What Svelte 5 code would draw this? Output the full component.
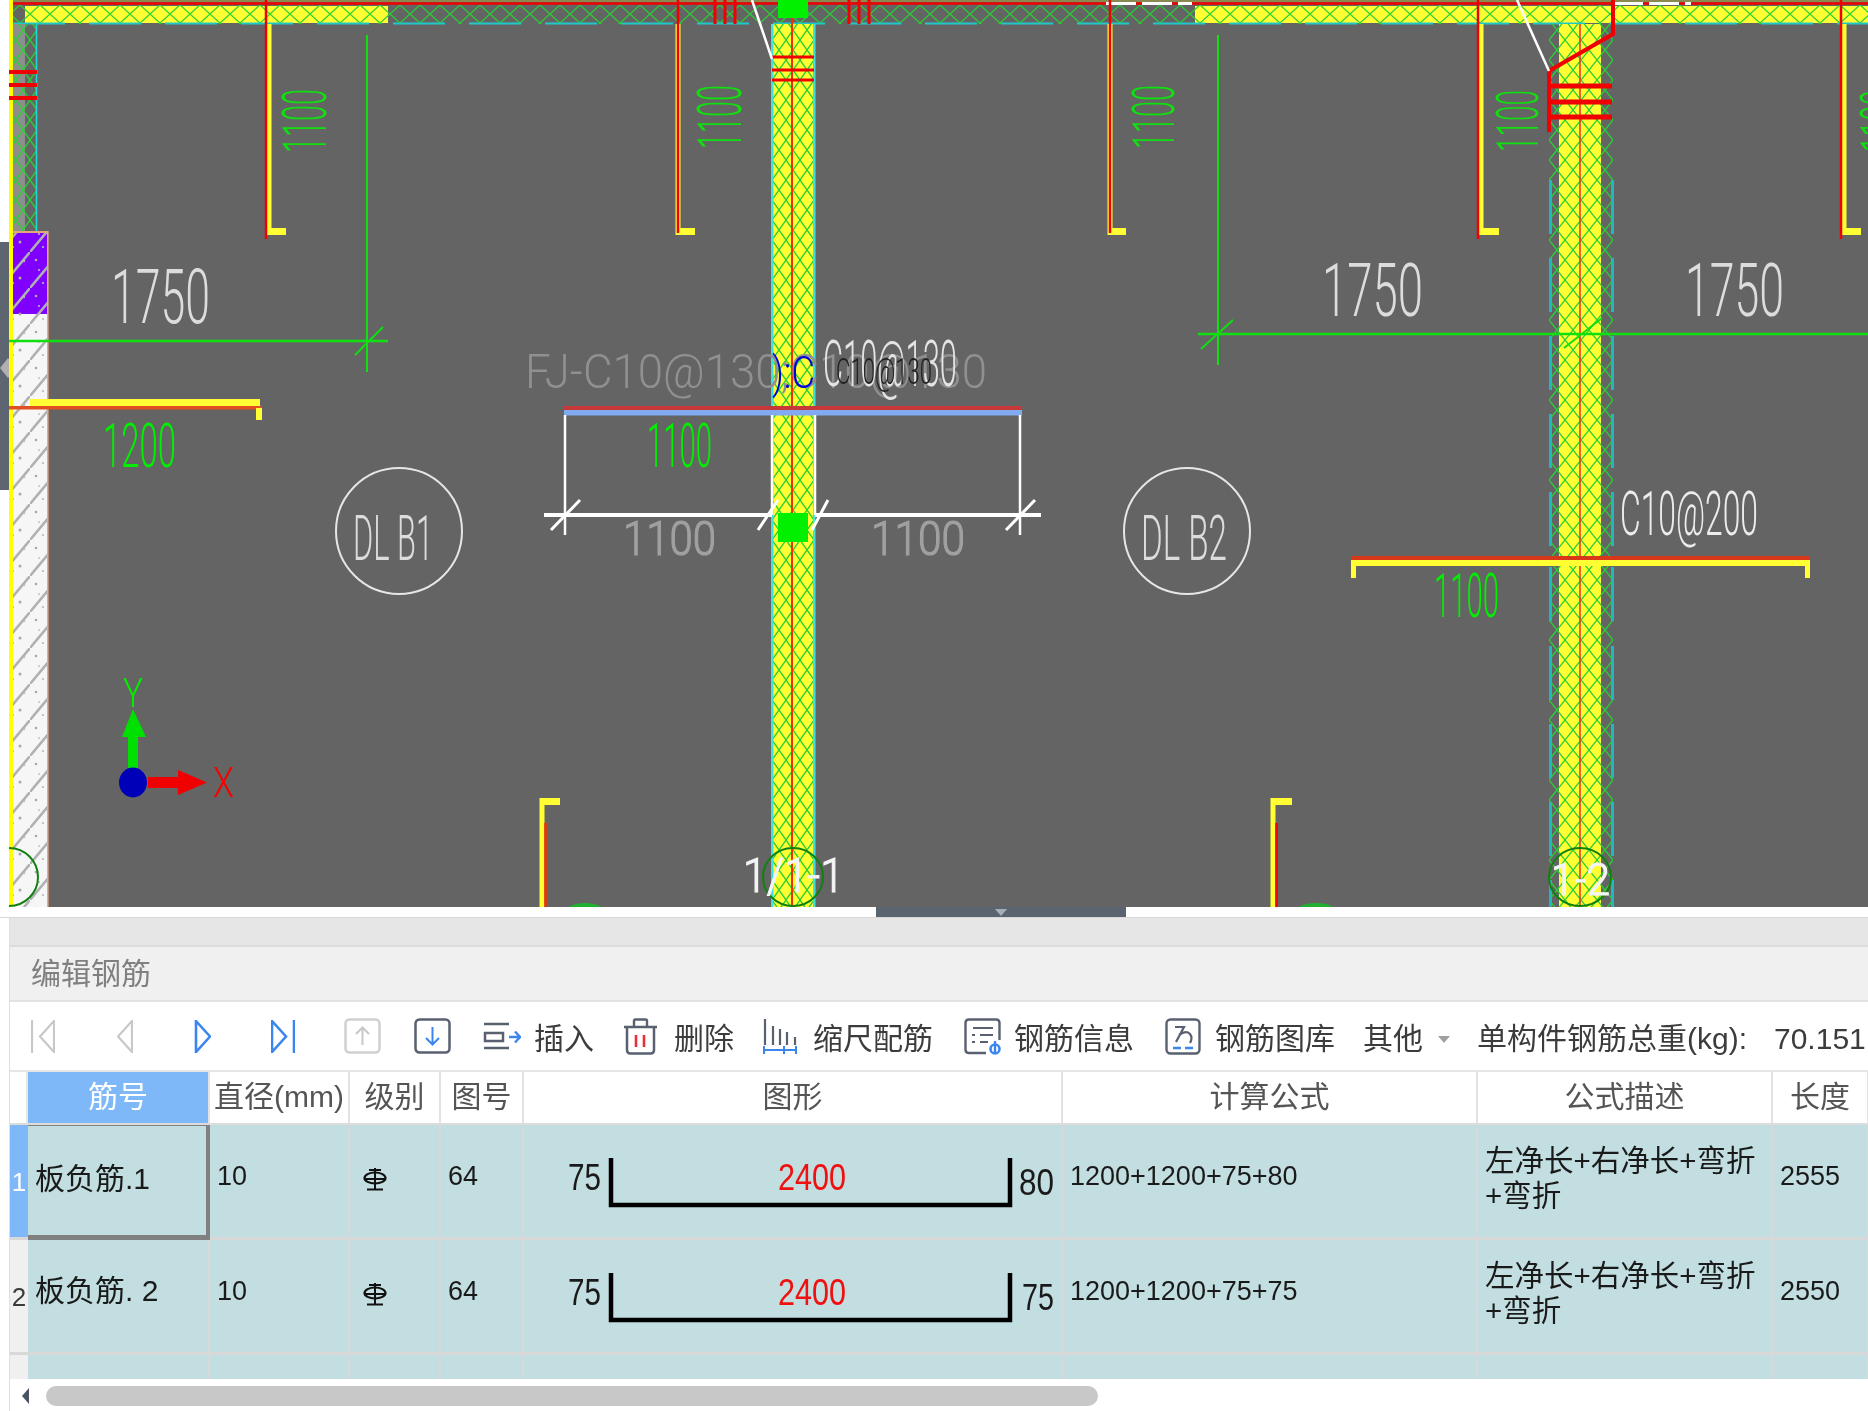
<script>
  // CAD labels: x, baseline y, text width, glyph height, colour, extra outline for the heavier ones
  const labels = [
    { t: '1750', x: 111, y: 323, w: 99, h: 54, c: '#dcdcdc' },
    { t: '1750', x: 1322, y: 316, w: 101, h: 53, c: '#dcdcdc' },
    { t: '1750', x: 1685, y: 316, w: 99, h: 53, c: '#dcdcdc' },
    { t: '1200', x: 103, y: 467, w: 73, h: 44, c: '#00f000' },
    { t: '1100', x: 647, y: 467, w: 65, h: 44, c: '#00f000' },
    { t: '1100', x: 1434, y: 617, w: 65, h: 44, c: '#00f000' },
    { t: '1100', x: 623, y: 555, w: 93, h: 34, c: '#a0a0a0', sw: 1.2 },
    { t: '1100', x: 871, y: 555, w: 94, h: 34, c: '#a0a0a0', sw: 1.2 },
    { t: 'FJ-C10@130;C10@130', x: 525, y: 388, w: 462, h: 34, c: '#909090' },
    { t: '):C', x: 772, y: 388, w: 43, h: 32, c: '#0000e0' },
    { t: 'C10@130', x: 823, y: 386, w: 134, h: 46, c: '#e4e4e4' },
    { t: 'C10@130', x: 836, y: 384, w: 96, h: 26, c: '#222222' },
    { t: 'C10@200', x: 1620, y: 535, w: 138, h: 43, c: '#ececec' },
    { t: 'DL B1', x: 353, y: 560, w: 80, h: 45, c: '#dcdcdc' },
    { t: 'DL B2', x: 1141, y: 560, w: 86, h: 45, c: '#dcdcdc' },
    { t: '1/1-1', x: 743, y: 892, w: 101, h: 34, c: '#f4f4f4', sw: 1.2 },
    { t: '1-2', x: 1551, y: 895, w: 59, h: 32, c: '#f4f4f4', sw: 1.2 },
    { t: 'Y', x: 123, y: 707, w: 20, h: 29, c: '#00f000' },
    { t: 'X', x: 213, y: 797, w: 21, h: 30, c: '#f80000' }
  ]

  // "1100" written up the sheet next to each top rebar
  const upright = [
    { x: 326, y: 153, w: 64, h: 43 },
    { x: 741, y: 149, w: 64, h: 43 },
    { x: 1174, y: 149, w: 64, h: 42 },
    { x: 1538, y: 152, w: 62, h: 42 },
    { x: 1902, y: 152, w: 62, h: 42 }
  ]

  // x of yellow leg, hook end, x and bottom of the red leg
  const topBars = [
    { x: 269, hook: 286, red: 266, end: 239 },
    { x: 678, hook: 695, red: 678, end: 233 },
    { x: 1110, hook: 1126, red: 1110, end: 233 },
    { x: 1481, hook: 1499, red: 1478, end: 239 },
    { x: 1844, hook: 1861, red: 1841, end: 239 }
  ]

  const columns = [
    { name: '筋号', head: 'active' },
    { name: '直径(mm)' },
    { name: '级别' },
    { name: '图号' },
    { name: '图形' },
    { name: '计算公式' },
    { name: '公式描述' },
    { name: '长度' }
  ]

  const rows = [
    { no: '1', name: '板负筋.1', end: '80', endX: 495, endW: 35, formula: '1200+1200+75+80', len: '2555', selected: true },
    { no: '2', name: '板负筋. 2', end: '75', endX: 498, endW: 32, formula: '1200+1200+75+75', len: '2550' }
  ]

  const dashStarts = [180, 258, 336, 414, 492, 567, 646, 724, 802]
</script>

<div class="page">
  <svg class="sheet" width="1868" height="907" viewBox="0 0 1868 907">
    <defs>
      <pattern id="hatch-h" width="20" height="18" patternUnits="userSpaceOnUse" y="5">
        <path d="M0 0 L20 18 M20 0 L0 18" stroke="#28d032" stroke-width="1.300" fill="none" />
      </pattern>
      <pattern id="hatch-v" width="14" height="20" patternUnits="userSpaceOnUse" x="772">
        <path d="M0 0 L14 20 M14 0 L0 20" stroke="#28d032" stroke-width="1.300" fill="none" />
      </pattern>
      <pattern id="hatch-r" width="16" height="20" patternUnits="userSpaceOnUse" x="1549">
        <path d="M0 0 L16 20 M16 0 L0 20" stroke="#28d032" stroke-width="1.300" fill="none" />
      </pattern>
      <pattern id="concrete" width="30" height="36" patternUnits="userSpaceOnUse">
        <path d="M0 36 L30 0" stroke="#b0b0b0" stroke-width="2.500" />
        <circle cx="6" cy="8" r="1.300" fill="#a8a8a8" />
        <circle cx="20" cy="26" r="1.500" fill="#a8a8a8" />
        <circle cx="13" cy="31" r="1.100" fill="#b8b8b8" />
        <circle cx="24" cy="9" r="1.200" fill="#b8b8b8" />
        <circle cx="9" cy="18" r="1" fill="#c0c0c0" />
      </pattern>
    </defs>

    <rect width="1868" height="907" fill="#646464" />
    <rect width="9" height="907" fill="#ffffff" />
    <rect y="242" width="9" height="248" fill="#5c6570" />
    <polygon points="0,368 8,358 16,368 8,378" fill="#b0b0b0" />

    <!-- top wall -->
    <rect x="25" y="6" width="363" height="17" fill="#ffff33" />
    <rect x="1195" y="6" width="673" height="17" fill="#ffff33" />
    <rect x="13" y="5" width="1855" height="19" fill="url(#hatch-h)" />
    <line x1="13" y1="23.500" x2="1868" y2="23.500" stroke="#20c8c8" stroke-width="2" stroke-dasharray="52 24" />
    <rect x="9" y="0" width="1859" height="2" fill="#8a8a50" />
    <line x1="9" y1="3.500" x2="1868" y2="3.500" stroke="#f00000" stroke-width="2.500" />
    <line x1="1106" y1="3.500" x2="1192" y2="3.500" stroke="#ffffff" stroke-width="3" stroke-dasharray="30 6" />
    <line x1="1613" y1="3.500" x2="1691" y2="3.500" stroke="#ffffff" stroke-width="3" stroke-dasharray="30 6" />

    <!-- left wall -->
    <rect x="13" y="24" width="12" height="210" fill="#8e8e8e" />
    <rect x="13" y="24" width="24" height="210" fill="url(#hatch-v)" />
    <line x1="36.500" y1="24" x2="36.500" y2="232" stroke="#20d8d8" stroke-width="1.600" />
    <rect x="13" y="233" width="34" height="81" fill="#8000ff" />
    <rect x="13" y="314" width="34" height="593" fill="#f6f6f6" />
    <rect x="13" y="233" width="34" height="674" fill="url(#concrete)" />
    <rect x="13" y="231" width="34" height="2" fill="#e0a878" />
    <rect x="47" y="231" width="1.600" height="676" fill="#f0a878" />
    <rect x="9" y="0" width="4" height="907" fill="#ffff00" />
    <g stroke="#f00000" stroke-width="4">
      <line x1="9" y1="72" x2="37" y2="72" />
      <line x1="9" y1="85" x2="37" y2="85" />
      <line x1="9" y1="98" x2="37" y2="98" />
    </g>
    <path d="M9 848A29 29 0 0 1 9 906" fill="none" stroke="#108010" stroke-width="2" />

    <!-- middle wall -->
    <rect x="772" y="24" width="42" height="883" fill="#ffff33" />
    <rect x="772" y="24" width="42" height="883" fill="url(#hatch-v)" />
    <rect x="771" y="24" width="2.500" height="883" fill="#40e0e0" />
    <rect x="813" y="24" width="2.500" height="883" fill="#40e0e0" />
    <line x1="792" y1="0" x2="792" y2="907" stroke="#f03000" stroke-width="2" />
    <g stroke="#f00000" stroke-width="3">
      <line x1="772" y1="57" x2="814" y2="57" />
      <line x1="772" y1="70" x2="814" y2="70" />
      <line x1="772" y1="80" x2="814" y2="80" />
      <line x1="715" y1="0" x2="715" y2="24" />
      <line x1="725" y1="0" x2="725" y2="24" />
      <line x1="735" y1="0" x2="735" y2="24" />
      <line x1="849" y1="0" x2="849" y2="24" />
      <line x1="859" y1="0" x2="859" y2="24" />
      <line x1="869" y1="0" x2="869" y2="24" />
    </g>
    <line x1="752" y1="0" x2="772" y2="59" stroke="#ffffff" stroke-width="2.500" />
    <rect x="778" y="0" width="30" height="18" fill="#00f000" />

    <!-- right wall -->
    <rect x="1559" y="24" width="42" height="883" fill="#ffff33" />
    <rect x="1549" y="24" width="64" height="883" fill="url(#hatch-r)" />
    {#each dashStarts as y}
      <rect x="1549" {y} width="3" height="54" fill="#20b8c0" />
      <rect x="1611" {y} width="3" height="54" fill="#20b8c0" />
    {/each}
    <rect x="1549" y="880" width="3" height="27" fill="#20b8c0" />
    <rect x="1611" y="880" width="3" height="27" fill="#20b8c0" />
    <line x1="1580" y1="24" x2="1580" y2="907" stroke="#f03828" stroke-width="1.600" />
    <polyline points="1613,0 1613,34 1549,71 1549,132" fill="none" stroke="#f00000" stroke-width="4" />
    <g stroke="#f00000" stroke-width="5">
      <line x1="1549" y1="86" x2="1612" y2="86" />
      <line x1="1549" y1="102" x2="1612" y2="102" />
      <line x1="1549" y1="117" x2="1612" y2="117" />
    </g>
    <line x1="1517" y1="0" x2="1549" y2="71" stroke="#ffffff" stroke-width="2.500" />

    <!-- top rebars -->
    {#each topBars as bar}
      <line x1={bar.x} y1="24" x2={bar.x} y2="235" stroke="#ffff33" stroke-width="5" />
      <line x1={bar.x - 2} y1="231.500" x2={bar.hook} y2="231.500" stroke="#ffff33" stroke-width="7" />
      <line x1={bar.red} y1="0" x2={bar.red} y2={bar.end} stroke="#f00000" stroke-width="2.500" />
    {/each}

    <!-- dimension lines -->
    <g stroke="#10e010" stroke-width="2">
      <line x1="367" y1="35" x2="367" y2="372" />
      <line x1="9" y1="341" x2="388" y2="341" stroke-width="2.500" />
      <line x1="355" y1="355" x2="383" y2="327" />
      <line x1="1218" y1="35" x2="1218" y2="365" />
      <line x1="1198" y1="334" x2="1868" y2="334" stroke-width="2.500" />
      <line x1="1201" y1="349" x2="1233" y2="320" />
      <line x1="1564" y1="348" x2="1602" y2="318" />
    </g>

    <!-- left bracket bar -->
    <rect x="30" y="399" width="230" height="8" fill="#ffff33" />
    <rect x="9" y="406" width="253" height="3.500" fill="#e05020" />
    <rect x="256" y="408" width="6" height="12" fill="#ffff33" />

    <!-- middle bracket bar -->
    <rect x="564" y="406" width="458" height="4" fill="#c83838" />
    <rect x="564" y="410" width="458" height="5.500" fill="#82aaf0" />
    <g stroke="#ffffff">
      <line x1="565" y1="415" x2="565" y2="535" stroke-width="2.500" />
      <line x1="1020" y1="415" x2="1020" y2="535" stroke-width="2.500" />
      <line x1="772" y1="415" x2="772" y2="515" stroke-width="2.500" />
      <line x1="815" y1="415" x2="815" y2="515" stroke-width="2.500" />
      <line x1="544" y1="515" x2="772" y2="515" stroke-width="4" />
      <line x1="815" y1="515" x2="1041" y2="515" stroke-width="4" />
      <line x1="551" y1="530" x2="580" y2="500" stroke-width="3" />
      <line x1="758" y1="530" x2="778" y2="500" stroke-width="3" />
      <line x1="812" y1="530" x2="828" y2="500" stroke-width="3" />
      <line x1="1006" y1="530" x2="1035" y2="500" stroke-width="3" />
    </g>
    <rect x="778" y="513" width="30" height="29" fill="#00f000" />

    <!-- right bracket bar -->
    <rect x="1351" y="556" width="459" height="4" fill="#d83818" />
    <rect x="1351" y="560" width="459" height="6" fill="#ffff33" />
    <rect x="1351" y="565" width="5" height="13" fill="#ffff33" />
    <rect x="1805" y="565" width="5" height="13" fill="#ffff33" />

    <!-- slab marks -->
    <g fill="none" stroke="#e6e6e6" stroke-width="2">
      <circle cx="399" cy="531" r="63" />
      <circle cx="1187" cy="531" r="63" />
    </g>

    <!-- bottom rebars -->
    <line x1="542" y1="798" x2="542" y2="907" stroke="#ffff33" stroke-width="5" />
    <line x1="540" y1="801.500" x2="560" y2="801.500" stroke="#ffff33" stroke-width="7" />
    <line x1="545.500" y1="823" x2="545.500" y2="907" stroke="#f03000" stroke-width="2.500" />
    <line x1="1273" y1="798" x2="1273" y2="907" stroke="#ffff33" stroke-width="5" />
    <line x1="1271" y1="801.500" x2="1292" y2="801.500" stroke="#ffff33" stroke-width="7" />
    <line x1="1276.500" y1="823" x2="1276.500" y2="907" stroke="#f00000" stroke-width="2.500" />
    <ellipse cx="585" cy="912" rx="20" ry="9" fill="#20b030" />
    <ellipse cx="1316" cy="912" rx="21" ry="9" fill="#20b030" />

    <!-- axis marker -->
    <rect x="128" y="735" width="10" height="35" fill="#00e000" />
    <polygon points="133,709 146,737 122,737" fill="#00e000" />
    <rect x="148" y="777" width="32" height="11" fill="#f00000" />
    <polygon points="178,770 207,782.500 178,795" fill="#f00000" />
    <ellipse cx="133" cy="782.500" rx="14" ry="15" fill="#0000b8" />

    <!-- grid bubbles -->
    <ellipse cx="793" cy="877" rx="30" ry="29" fill="none" stroke="#108010" stroke-width="2" />
    <ellipse cx="1580" cy="877" rx="31" ry="29" fill="none" stroke="#108010" stroke-width="2" />

    {#each labels as l}
      <text class="cad" x={l.x} y={l.y} font-size={l.h / 0.711} textLength={l.w} lengthAdjust="spacingAndGlyphs" fill={l.c} stroke={l.sw ? l.c : 'none'} stroke-width={l.sw ?? 0}>{l.t}</text>
    {/each}
    {#each upright as l}
      <text class="cad" transform="translate({l.x} {l.y}) rotate(-90)" font-size={l.h / 0.711} textLength={l.w} lengthAdjust="spacingAndGlyphs" fill="#10e010">1100</text>
    {/each}
  </svg>

  <div class="splitter">
    <div class="handle"><span class="handle-arrow"></span></div>
  </div>

  <div class="panel">
    <div class="gray-bar"></div>
    <div class="title">编辑钢筋</div>

    <div class="toolbar">
      <svg class="nav first" width="24" height="33" viewBox="0 0 24 33"><path d="M1 0V33" /><path d="M23 1L9 16.500 23 32Z" /></svg>
      <svg class="nav prev" width="16" height="33" viewBox="0 0 16 33"><path d="M15 1L1 16.500 15 32Z" /></svg>
      <svg class="nav on next" width="17" height="33" viewBox="0 0 17 33"><path d="M2 1L16 16.500 2 32Z" /></svg>
      <svg class="nav on last" width="24" height="33" viewBox="0 0 24 33"><path d="M1 1L15 16.500 1 32Z" /><path d="M23 0V33" /></svg>

      <svg class="move up" width="37" height="36" viewBox="0 0 37 36">
        <rect x="1.500" y="1.500" width="34" height="33" rx="4" fill="none" stroke="#d0d0d0" stroke-width="2.500" />
        <path d="M18.500 27V10M12 16l6.500-6.500L25 16" fill="none" stroke="#c8c8c8" stroke-width="2" />
      </svg>
      <svg class="move down" width="37" height="36" viewBox="0 0 37 36">
        <rect x="1.500" y="1.500" width="34" height="33" rx="4" fill="none" stroke="#596170" stroke-width="2.500" />
        <path d="M18.500 9V26M12 20l6.500 6.500L25 20" fill="none" stroke="#3b86ee" stroke-width="2" />
      </svg>

      <svg class="tool t-insert" width="38" height="28" viewBox="0 0 38 28">
        <path d="M26 2H1M1 26H26" fill="none" stroke="#596170" stroke-width="2.500" />
        <rect x="2" y="11" width="18" height="8" fill="none" stroke="#596170" stroke-width="2.500" />
        <path d="M26 15H37M32 9.500l5 5.500-5 5.500" fill="none" stroke="#3b86ee" stroke-width="2.400" />
      </svg>
      <span class="label l-insert">插入</span>

      <svg class="tool t-delete" width="35" height="37" viewBox="0 0 35 37">
        <path d="M1 9H34M11 8V3q0-1.500 1.500-1.500h10q1.500 0 1.500 1.500V8" fill="none" stroke="#596170" stroke-width="2.400" />
        <path d="M4 9V32q0 3.500 3.500 3.500h20q3.500 0 3.500-3.500V9" fill="none" stroke="#596170" stroke-width="2.500" />
        <path d="M13 17V29M21 17V29" stroke="#e83038" stroke-width="2.600" />
      </svg>
      <span class="label l-delete">删除</span>

      <svg class="tool t-scale" width="34" height="37" viewBox="0 0 34 37">
        <path d="M2 1V27M10 8V27M17 11V27M24 14V27M32 19V27" stroke="#596170" stroke-width="2.200" />
        <path d="M1 32H33M1 28V36M21 28V36M33 28V36" fill="none" stroke="#3b86ee" stroke-width="2" />
      </svg>
      <span class="label l-scale">缩尺配筋</span>

      <svg class="tool t-info" width="38" height="37" viewBox="0 0 38 37">
        <path d="M22 35H5q-3.500 0-3.500-3.500V5Q1.500 1.500 5 1.500H32q3.500 0 3.500 3.500V22" fill="none" stroke="#596170" stroke-width="2.400" />
        <path d="M9 10H29M16 17H29M16 24H24M8 17h3M8 24h3" fill="none" stroke="#596170" stroke-width="2.200" />
        <circle cx="31" cy="31" r="4.500" fill="none" stroke="#3b86ee" stroke-width="2.600" />
        <path d="M31 23V36" stroke="#3b86ee" stroke-width="2.400" />
      </svg>
      <span class="label l-info">钢筋信息</span>

      <svg class="tool t-lib" width="36" height="37" viewBox="0 0 36 37">
        <rect x="1.500" y="1.500" width="33" height="34" rx="4" fill="none" stroke="#596170" stroke-width="2.400" />
        <path d="M10 9H19L11 24M14 17Q21 12 25 16Q28 20 25 25" fill="none" stroke="#596170" stroke-width="2.200" />
        <path d="M8 30H16M20 30H28" stroke="#3b86ee" stroke-width="2.400" />
      </svg>
      <span class="label l-lib">钢筋图库</span>

      <span class="label l-more">其他</span>
      <span class="caret"></span>
      <span class="label l-total">单构件钢筋总重(kg):</span>
      <span class="label l-value">70.151</span>
    </div>

    <div class="grid-head">
      <div class="corner"></div>
      {#each columns as col}
        <div class="hcell" class:active={col.head === 'active'}>{col.name}</div>
      {/each}
    </div>

    {#each rows as row}
      <div class="grid-row">
        <div class="row-no" class:active={row.selected}>{row.no}</div>
        <div class="cell name" class:selected={row.selected}>{row.name}</div>
        <div class="cell num">10</div>
        <div class="cell grade">
          <svg width="24" height="23" viewBox="0 0 24 23">
            <ellipse cx="12" cy="10" rx="10.500" ry="5.500" fill="none" stroke="#111" stroke-width="2.200" />
            <path d="M12 0V22M6 2H18M2 11H22M4 21.500H20" stroke="#111" stroke-width="2" fill="none" />
          </svg>
        </div>
        <div class="cell num">64</div>
        <div class="cell shape">
          <svg width="539" height="112" viewBox="0 0 539 112">
            <polyline points="87,33 87,80 486,80 486,33" fill="none" stroke="#000" stroke-width="4.500" />
            <text class="dim" x="44" y="65" textLength="33" lengthAdjust="spacingAndGlyphs">75</text>
            <text class="dim red" x="254" y="65" textLength="68" lengthAdjust="spacingAndGlyphs">2400</text>
            <text class="dim" x={row.endX} y="70" textLength={row.endW} lengthAdjust="spacingAndGlyphs">{row.end}</text>
          </svg>
        </div>
        <div class="cell num">{row.formula}</div>
        <div class="cell desc">左净长+右净长+弯折<br />+弯折</div>
        <div class="cell num">{row.len}</div>
      </div>
    {/each}

    <div class="grid-row tail">
      <div class="row-no"></div>
      <div class="cell"></div>
      <div class="cell"></div>
      <div class="cell"></div>
      <div class="cell"></div>
      <div class="cell"></div>
      <div class="cell"></div>
      <div class="cell"></div>
      <div class="cell"></div>
    </div>

    <div class="scrollbar">
      <span class="scroll-left"></span>
      <div class="thumb"></div>
    </div>
  </div>
</div>

<style>
  :global(body) { margin: 0; background: #fff; }
  .page {
    width: 1868px; height: 1411px; overflow: hidden; background: #fff;
    font-family: "Liberation Sans", "Noto Sans CJK SC", sans-serif; color: #3c3c3c;
    filter: blur(0.7px);
  }
  .sheet { display: block; }
  .cad { font-family: Roboto, "Liberation Sans", sans-serif; font-weight: 300; }
  .splitter { height: 10px; padding-left: 876px; border-bottom: 1px solid #d8d8d8; }
  .handle { width: 250px; height: 10px; background: #5b6572; display: flex; justify-content: center; }
  .handle-arrow {
    width: 0; height: 0; margin-top: 2px;
    border: 6px solid transparent; border-top: 7px solid #a8aeb5; border-bottom: 0;
  }
  .panel { margin-left: 9px; border-left: 1px solid #e0e0e0; }
  .gray-bar { height: 27px; background: #e6e6e6; border-bottom: 2px solid #dcdcdc; }
  .title {
    height: 53px; padding-left: 21px; background: #f0f0f0; border-bottom: 2px solid #e2e2e2;
    font-size: 30px; line-height: 53px; color: #808080;
  }

  .toolbar {
    height: 68px; display: flex; align-items: center; padding-left: 21px;
    border-bottom: 2px solid #e6e6e6; white-space: nowrap; overflow: hidden;
  }
  .toolbar svg { flex-shrink: 0; }
  .nav path { fill: none; stroke: #c8c8c8; stroke-width: 2.2; }
  .nav.on path { stroke: #3b86ee; stroke-width: 2.6; }
  .prev { margin-left: 62px; }
  .next { margin-left: 61px; }
  .last { margin-left: 60px; }
  .up { margin-left: 49px; }
  .down { margin-left: 33px; }
  .t-insert { margin-left: 32px; }
  .t-delete { margin-left: 29px; }
  .t-scale { margin-left: 29px; }
  .t-info { margin-left: 31px; }
  .t-lib { margin-left: 31px; }
  .label { font-size: 30px; line-height: 40px; margin-top: 6px; color: #3c3c3c; flex-shrink: 0; }
  .l-insert { margin-left: 13px; }
  .l-delete { margin-left: 16px; }
  .l-scale { margin-left: 16px; }
  .l-info { margin-left: 12px; }
  .l-lib { margin-left: 14px; }
  .l-more { margin-left: 28px; }
  .caret {
    width: 0; height: 0; margin: 6px 0 0 15px; flex-shrink: 0;
    border: 6px solid transparent; border-top: 7px solid #a0a0a0; border-bottom: 0;
  }
  .l-total { margin-left: 27px; }
  .l-value { margin-left: 27px; }

  .grid-head, .grid-row {
    display: grid;
    grid-template-columns: 18px 182px 140px 91px 83px 539px 415px 295px 96px;
  }
  .grid-head { height: 51px; border-bottom: 2px solid #dcdcdc; }
  .corner { border-right: 2px solid #e6e6e6; }
  .hcell {
    border-right: 2px solid #e2e2e2; text-align: center;
    font-size: 30px; line-height: 50px; color: #555; white-space: nowrap;
  }
  .hcell.active { background: #7fb8f8; color: #fff; }

  .grid-row { height: 115px; background: #c2dee0; }
  .grid-row.tail { height: 24px; }
  .row-no {
    box-sizing: border-box; background: #f0f0f0; border-bottom: 3px solid #d8d8d8;
    font-size: 26px; line-height: 114px; text-align: center; overflow: hidden;
  }
  .row-no.active { background: #7fb8f8; color: #fff; }
  .cell {
    box-sizing: border-box; border-right: 2px solid #d8d8d8; border-bottom: 3px solid #d8d8d8;
    padding: 31px 0 0 7px; font-size: 27px; line-height: 40px; color: #1a1a1a; overflow: hidden; white-space: nowrap;
  }
  .tail .cell, .tail .row-no { border-bottom: 0; padding: 0; }
  .cell.name { font-size: 30px; padding-top: 31px; }
  .cell.name.selected { padding-top: 33px; border-right: 4px solid #808080; border-bottom: 5px solid #808080; border-top: 1px solid #808080; }
  .cell.grade { padding: 37px 0 0 13px; }
  .cell.shape { padding: 0; }
  .cell.desc { font-size: 29.5px; line-height: 35px; padding-top: 18px; }
  .dim { font-family: "Liberation Sans", sans-serif; font-size: 36px; fill: #1a1a1a; }
  .dim.red { fill: #f01010; }

  .scrollbar { height: 34px; display: flex; align-items: center; padding-left: 12px; }
  .scroll-left {
    width: 0; height: 0; flex-shrink: 0;
    border: 8px solid transparent; border-right: 7px solid #4a5460; border-left: 0;
  }
  .thumb { width: 1052px; height: 20px; margin-left: 17px; background: #c8c8c8; border-radius: 10px; }
</style>
